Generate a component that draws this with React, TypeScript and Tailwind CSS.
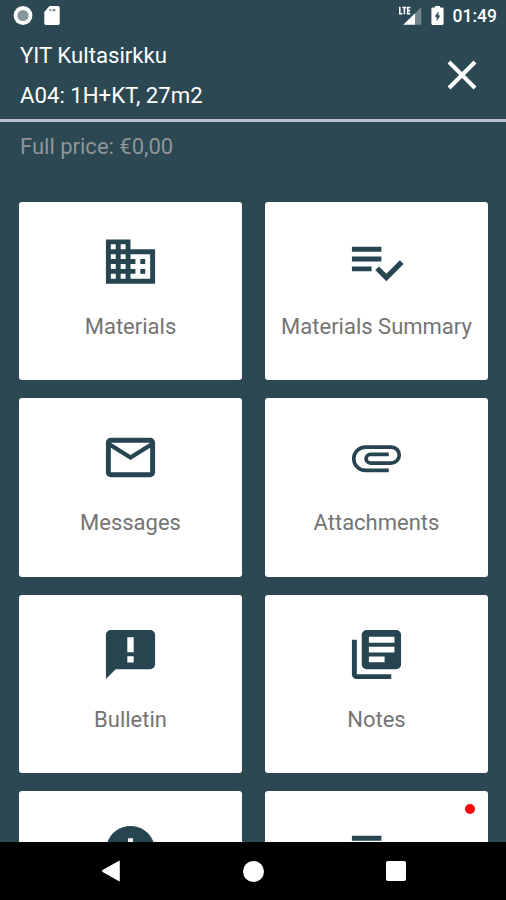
import type { ReactNode } from "react";
import { MdDomain, MdInfo, MdMailOutline } from "react-icons/md";

const Glyph = ({ d }: { d: string }) => (
  <svg viewBox="0 0 24 24" fill="currentColor" className="size-full">
    <path fillRule="evenodd" d={d} />
  </svg>
);

const checklist =
  "M14 10H2v2h12v-2zm0-4H2v2h12V6zM2 16h8v-2H2v2zm19.5-4.5L23 13l-6.99 7-4.51-4.5L13 14l3.01 3 5.49-5.5z";
const attachment =
  "M7.5 18A5.5 5.5 0 0 1 2 12.5 5.5 5.5 0 0 1 7.5 7H18a4 4 0 0 1 0 8H9.5a2.5 2.5 0 0 1 0-5H17v1.5H9.5a1 1 0 0 0 0 2H18a2.5 2.5 0 0 0 0-5H7.5a4 4 0 0 0 0 8H17V18H7.5z";
const bulletin =
  "M20 2H4c-1.1 0-2 .9-2 2v18l4-4h14c1.1 0 2-.9 2-2V4c0-1.1-.9-2-2-2zM13.3 11.1h-2.6V5h2.6zM13.3 15.3h-2.6v-2.6h2.6z";
const notes =
  "M4 6H2v14c0 1.1.9 2 2 2h14v-2H4V6zM20 2H8c-1.1 0-2 .9-2 2v12c0 1.1.9 2 2 2h12c1.1 0 2-.9 2-2V4c0-1.1-.9-2-2-2zM19.3 11.2H8.9V8.8h10.4zM15.3 15.2H8.9v-2.4h6.4zM19.3 7.2H8.9V4.8h10.4z";

const tiles: { label: string; icon: ReactNode; unread?: boolean }[] = [
  { label: "Materials", icon: <MdDomain className="size-full" /> },
  { label: "Materials Summary", icon: <Glyph d={checklist} /> },
  { label: "Messages", icon: <MdMailOutline className="size-full" /> },
  { label: "Attachments", icon: <Glyph d={attachment} /> },
  { label: "Bulletin", icon: <Glyph d={bulletin} /> },
  { label: "Notes", icon: <Glyph d={notes} /> },
  { label: "", icon: <MdInfo className="size-full" /> },
  { label: "", icon: <Glyph d={checklist} />, unread: true },
];

const StatusBar = () => (
  <div className="flex h-8 items-center justify-between pl-[13px] pr-[9px] text-white">
    <div className="flex items-center gap-[11px]">
      <svg viewBox="0 0 20 20" className="size-5">
        <circle cx="10" cy="9.5" r="9.4" fill="#fff" />
        <circle cx="10" cy="9.5" r="5.6" fill="#87969c" />
      </svg>
      <svg viewBox="0 0 16 20" className="h-5 w-4">
        <path d="M5.5 0H14a1.7 1.7 0 0 1 1.7 1.7v15.6a1.7 1.7 0 0 1-1.7 1.7H2a1.7 1.7 0 0 1-1.7-1.7V6z" fill="#fff" />
        <path d="M5.4 3h1.7v2.2H5.4zM8.4 3h3v2.2h-3z" fill="#7d8c93" />
      </svg>
    </div>
    <div className="flex items-center">
      <svg viewBox="0 0 24 20" className="mr-[9px] h-5 w-6">
        <path d="M23.3 1v17.8h-6.3V7.3z" fill="#73868d" />
        <path d="M17 7.3v11.5H5.2z" fill="#fff" />
        <path d="M1.8 0.8v6.9h2.6M4.4 1.5h4M6.4 1.5v6.8M12.4 1.5H9.7v6.2h2.7M9.7 4.6h2.5" stroke="#fff" strokeWidth="1.6" fill="none" />
      </svg>
      <svg viewBox="0 0 13 20" className="mr-[9px] h-5 w-[13px]">
        <path d="M4 0h5v1.6h2.2A1.4 1.4 0 0 1 12.6 3v14.6a1.4 1.4 0 0 1-1.4 1.4H1.8A1.4 1.4 0 0 1 .4 17.6V3a1.4 1.4 0 0 1 1.4-1.4H4z" fill="#fff" />
        <path d="M7.4 5.2v4.2h1.9L5.7 15.2v-4.5H3.7z" fill="#2b4853" />
      </svg>
      <span className="text-[17.5px] leading-5 font-medium">01:49</span>
    </div>
  </div>
);

const Header = () => (
  <header className="flex h-[90px] items-start justify-between border-b-[3px] border-[#bcc2cc] pl-5 pr-7 text-white">
    <div className="pt-[3px] text-[22.2px] leading-10">
      <p>YIT Kultasirkku</p>
      <p>A04: 1H+KT, 27m2</p>
    </div>
    <svg viewBox="0 0 32 32" className="mt-[27px] size-8" stroke="currentColor" strokeWidth="4">
      <path d="M3 3l26 26M29 3L3 29" />
    </svg>
  </header>
);

const Tile = ({ label, icon, unread }: { label: string; icon: ReactNode; unread?: boolean }) => (
  <div className="relative flex h-[178.5px] flex-col items-center rounded-[3px] bg-white pt-[30px]">
    {unread && <span className="absolute right-[13px] top-[13px] size-2.5 rounded-full bg-[#fb0207]" />}
    <div className="size-[59px] text-[#264551]">{icon}</div>
    <span className="mt-[23px] text-[22px] leading-[26px] whitespace-nowrap text-[#747474]">{label}</span>
  </div>
);

const NavigationBar = () => (
  <nav className="grid h-[58px] shrink-0 grid-cols-[142px_142px_142px] items-center justify-center justify-items-center bg-black text-white">
    <svg viewBox="0 0 20 22" className="h-[22px] w-5" fill="currentColor">
      <path d="M1.6 10.1L17.6.9q1.2-.6 1.2.7v18.8q0 1.3-1.2.7L1.6 11.9q-1.4-.9 0-1.8z" />
    </svg>
    <span className="size-[21px] rounded-full bg-white" />
    <span className="ml-[2px] size-5 rounded-[2px] bg-white" />
  </nav>
);

export default function App() {
  return (
    <div className="flex h-[900px] w-[506px] flex-col overflow-hidden bg-[#2b4853] font-[Roboto,sans-serif]">
      <StatusBar />
      <Header />
      <main className="min-h-0 flex-1 overflow-hidden">
        <p className="pt-[10px] pl-5 text-[22px] leading-[30px] text-[#919595]">Full price: €0,00</p>
        <div className="mt-[39.5px] grid grid-cols-2 gap-x-[23px] gap-y-[18px] pr-[18px] pl-[19px]">
          {tiles.map((tile, i) => (
            <Tile key={i} {...tile} />
          ))}
        </div>
      </main>
      <NavigationBar />
    </div>
  );
}
